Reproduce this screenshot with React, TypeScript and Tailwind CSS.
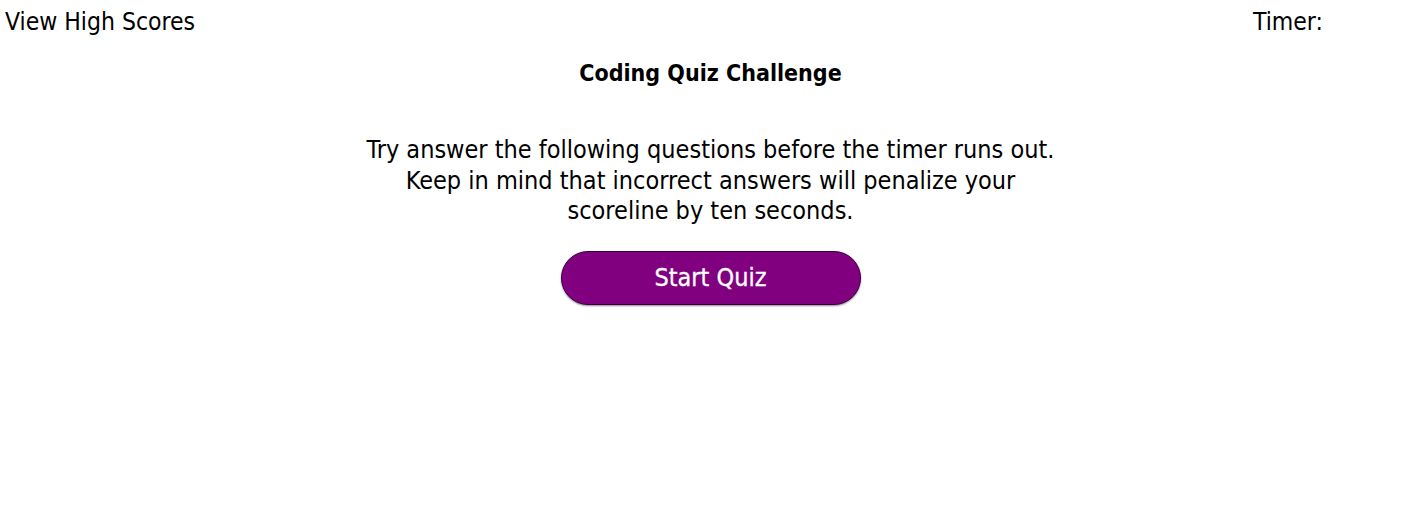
export default function App() {
  return (
    <div className="min-h-[527px] bg-white text-black font-['DejaVu_Sans_Condensed','DejaVu_Sans',sans-serif]">
      <header className="flex justify-between items-start text-[24.5px] leading-[44px] pl-[5px]">
        <a className="cursor-pointer">View High Scores</a>
        <div className="w-[168px]">Timer: <span></span></div>
      </header>
      <main className="flex flex-col items-center">
        <h1 className="text-[23px] font-bold mt-[14px] leading-[30px]">Coding Quiz Challenge</h1>
        <p className="w-[700px] text-center text-[25px] leading-[30.5px] mt-[47px]">
          Try answer the following questions before the timer runs out. Keep in mind that incorrect answers will
          penalize your scoreline by ten seconds.
        </p>
        <button className="mt-[24px] w-[300px] h-[54px] rounded-full bg-[#800080] border border-[#3d003d] text-white text-[25px] [-webkit-text-stroke:0.3px_white] shadow-[0_1px_2px_rgba(0,0,0,0.45)]">
          Start Quiz
        </button>
      </main>
    </div>
  );
}
